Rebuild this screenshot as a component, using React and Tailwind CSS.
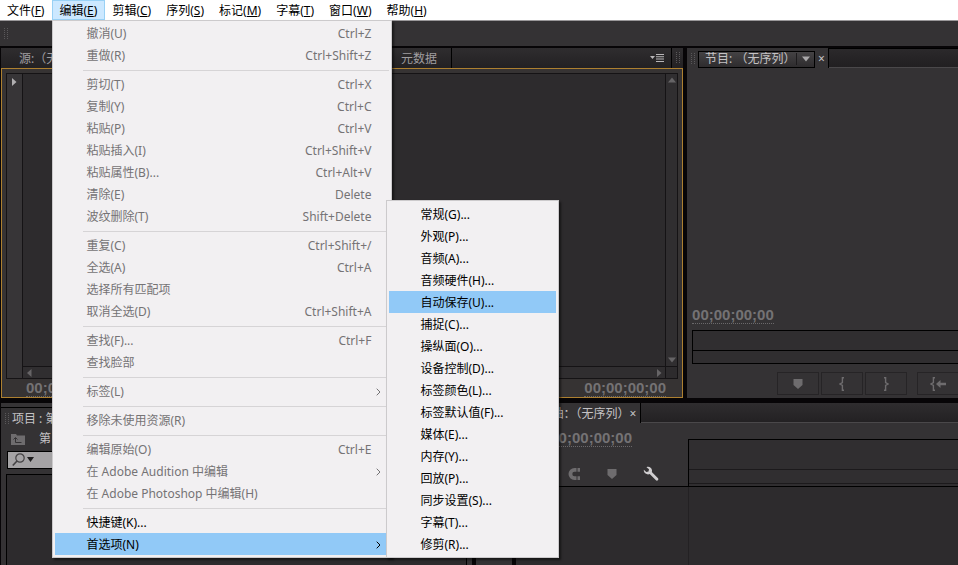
import React, { useState } from 'react';

const MENUS = [
  ['文件', 'F'],
  ['编辑', 'E'],
  ['剪辑', 'C'],
  ['序列', 'S'],
  ['标记', 'M'],
  ['字幕', 'T'],
  ['窗口', 'W'],
  ['帮助', 'H']
];

// null is a separator line
const EDIT_ITEMS = [
  { label: '撤消(U)', keys: 'Ctrl+Z' },
  { label: '重做(R)', keys: 'Ctrl+Shift+Z' },
  null,
  { label: '剪切(T)', keys: 'Ctrl+X' },
  { label: '复制(Y)', keys: 'Ctrl+C' },
  { label: '粘贴(P)', keys: 'Ctrl+V' },
  { label: '粘贴插入(I)', keys: 'Ctrl+Shift+V' },
  { label: '粘贴属性(B)...', keys: 'Ctrl+Alt+V' },
  { label: '清除(E)', keys: 'Delete' },
  { label: '波纹删除(T)', keys: 'Shift+Delete' },
  null,
  { label: '重复(C)', keys: 'Ctrl+Shift+/' },
  { label: '全选(A)', keys: 'Ctrl+A' },
  { label: '选择所有匹配项' },
  { label: '取消全选(D)', keys: 'Ctrl+Shift+A' },
  null,
  { label: '查找(F)...', keys: 'Ctrl+F' },
  { label: '查找脸部' },
  null,
  { label: '标签(L)', arrow: true },
  null,
  { label: '移除未使用资源(R)' },
  null,
  { label: '编辑原始(O)', keys: 'Ctrl+E' },
  { label: '在 Adobe Audition 中编辑', arrow: true },
  { label: '在 Adobe Photoshop 中编辑(H)' },
  null,
  { label: '快捷键(K)...', enabled: true }
];

const PREFERENCES = [
  '常规(G)...',
  '外观(P)...',
  '音频(A)...',
  '音频硬件(H)...',
  '自动保存(U)...',
  '捕捉(C)...',
  '操纵面(O)...',
  '设备控制(D)...',
  '标签颜色(L)...',
  '标签默认值(F)...',
  '媒体(E)...',
  '内存(Y)...',
  '回放(P)...',
  '同步设置(S)...',
  '字幕(T)...',
  '修剪(R)...'
];

const Chevron = () => (
  <svg viewBox="0 0 5 8" className="w-[5px] h-2" fill="none" stroke="currentColor">
    <path d="M.7.7L4 4 .7 7.300" />
  </svg>
);

const Triangle = ({ className = '', d }) => (
  <svg viewBox="0 0 8 8" className={`w-2 h-2 ${className}`} fill="currentColor">
    <path d={d} />
  </svg>
);

const UP = 'M4 1.5L8 6.5H0z';
const DOWN = 'M0 1.5h8L4 6.5z';
const LEFT = 'M6.5 0v8L2 4z';
const RIGHT = 'M2 0v8l4.5-4z';

const Marker = () => (
  <svg viewBox="0 0 10 10" className="w-[10px] h-[10px]" fill="currentColor">
    <path d="M.5 0h9v6L5 10 .5 6z" />
  </svg>
);

const Brace = ({ flip }) => (
  <svg viewBox="0 0 6 14" className={flip ? 'w-[6px] h-[14px] -scale-x-100' : 'w-[6px] h-[14px]'} fill="none" stroke="currentColor" strokeWidth="1.4">
    <path d="M5 .7H3.4v5L1 7l2.4 1.3v5H5" />
  </svg>
);

const Grip = () => (
  <svg viewBox="0 0 4 12" className="w-1 h-3 shrink-0" stroke="#5a585a" strokeDasharray="1 1">
    <path d="M.5 0v12M3.5 0v12" />
  </svg>
);

const Timecode = ({ value = '00;00;00;00' }) => (
  <span className="font-['Liberation_Sans'] font-bold text-[15px] leading-4 text-[#747274] border-b border-dotted border-[#6a686a]">
    {value}
  </span>
);

const MenuItem = ({ item }) => (
  <button
    type="button"
    role="menuitem"
    disabled={!item.enabled}
    className={`flex w-full h-[22px] items-center pt-[2px] pl-[31px] pr-2 ${item.enabled ? 'text-black' : 'text-[#757375]'}`}
  >
    <span className="flex-1 text-left">{item.label}</span>
    {item.keys && <span className="pr-[10px]">{item.keys}</span>}
    {item.arrow && <Chevron />}
  </button>
);

const EditMenu = () => {
  const [hovered, setHovered] = useState(4);

  return (
    <div role="menu" className="absolute z-10 left-0 top-full w-[340px] bg-[#f2f0f2] border border-[#cccacc] px-[2px] pt-px pb-[2px] shadow-[2px_2px_2px_rgba(0,0,0,0.5)]">
      {EDIT_ITEMS.map((item, i) =>
        item ? (
          <MenuItem key={i} item={item} />
        ) : (
          <div key={i} className="h-[7px] pl-7 pt-px flex items-center">
            <div className="h-px flex-1 bg-[#d6d4d6]" />
          </div>
        )
      )}
      <div className="relative">
        <button type="button" role="menuitem" className="flex w-full h-[22px] items-center pt-[2px] pl-[31px] pr-2 bg-[#91c9f7]">
          <span className="flex-1 text-left">首选项(N)</span>
          <Chevron />
        </button>
        <div role="menu" className="absolute left-full -ml-[3px] -bottom-[3px] w-[173px] bg-[#f2f0f2] border border-[#cccacc] p-[2px] shadow-[2px_2px_2px_rgba(0,0,0,0.5)]">
          {PREFERENCES.map((label, i) => (
            <button
              key={label}
              type="button"
              role="menuitem"
              onMouseEnter={() => setHovered(i)}
              className={`flex items-center w-full h-[22px] pt-[2px] pl-[31px] ${i === hovered ? 'bg-[#91c9f7]' : ''}`}
            >
              {label}
            </button>
          ))}
        </div>
      </div>
    </div>
  );
};

const MenuBar = () => (
  <nav className="flex h-5 shrink-0 bg-white text-black">
    {MENUS.map(([name, key]) => (
      <div key={key} className="relative">
        <button
          type="button"
          className={`h-5 pt-px pl-[6px] pr-[7px] border leading-4 ${key === 'E' ? 'bg-[#cce8ff] border-[#99d1f5]' : 'border-transparent'}`}
        >
          {name}(<u>{key}</u>)
        </button>
        {key === 'E' && <EditMenu />}
      </div>
    ))}
  </nav>
);

const SourceMonitor = () => (
  <section className="w-[71.3%] shrink-0 flex flex-col pl-px">
    <div className="h-5 flex items-stretch bg-linear-to-b from-[#2f2d2f] to-[#232123] text-[#a09ea0]">
      <button type="button" className="w-[386px] pt-[2px] pl-[18px] text-left">源:（无</button>
      <button type="button" className="w-[65px] pt-[2px] border-x border-black text-left pl-[13px]">元数据</button>
      <div className="flex-1" />
      <button type="button" aria-label="面板菜单" className="px-[7px] text-[#b8b6b8]">
        <svg viewBox="0 0 14 8" className="w-[14px] h-2" fill="currentColor">
          <path d="M0 2h5L2.500 5zM6 0h8v1H6zM6 2.300h8v1H6zM6 4.600h8v1H6zM6 7h8v1H6z" />
        </svg>
      </button>
      <div className="w-3 border-l border-black flex items-center justify-center"><Grip /></div>
    </div>
    <div className="flex-1 flex flex-col border border-[#ad8030] bg-[#363333] pt-1 px-1">
      <div className="flex-1 grid grid-cols-[16px_1fr_12px] grid-rows-[1fr_12px] border border-[#151315] bg-[#2d2b2d] text-[#666466]">
        <div className="row-span-2 bg-[#373537] border-r border-[#151315] pt-1 pl-[3px]">
          <Triangle d={RIGHT} className="text-[#b0aeb0]" />
        </div>
        <div />
        <div className="border-l border-[#151315] bg-[#302e30] flex flex-col justify-between items-center py-[2px]">
          <Triangle d={UP} />
          <Triangle d={DOWN} />
        </div>
        <div className="border-t border-[#151315] bg-[#302e30] flex justify-between items-center px-[2px]">
          <Triangle d={LEFT} />
          <Triangle d={RIGHT} />
        </div>
        <div className="border-t border-l border-[#151315]" />
      </div>
      <div className="h-[18px] pt-px flex justify-between pl-5 pr-3">
        <Timecode value="00;00" />
        <Timecode />
      </div>
    </div>
  </section>
);

const ControlButton = ({ label, children, className = '' }) => (
  <button
    type="button"
    aria-label={label}
    className={`w-[42px] h-[23px] shrink-0 border border-[#262426] flex items-center justify-center ${className}`}
  >
    {children}
  </button>
);

const ProgramMonitor = () => (
  <section className="flex-1 min-w-0 flex flex-col bg-[#343234]">
    <div className="h-5 shrink-0 flex">
      <div className="flex items-center pt-[2px] pl-1 gap-[3px] w-[142px] border-r border-black">
        <Grip />
        <button type="button" className="h-[17px] w-[117px] shrink-0 flex items-center pl-[6px] border border-black bg-linear-to-b from-[#444244] to-[#2e2c2e] text-[#c4c2c4] whitespace-nowrap">
          <span className="flex-1 text-left">节目: （无序列）</span>
          <span className="border-l border-[#1d1b1d] pl-[5px] pr-1"><Triangle d={DOWN} className="my-[2px] text-[#aaa8aa]" /></span>
        </button>
        <button type="button" aria-label="关闭" className="text-[#c4c2c4]">×</button>
      </div>
      <div className="flex-1 bg-linear-to-b from-[#2b292b] to-[#211f21] border-y border-b-[#4a484a] border-t-black" />
    </div>
    <div className="flex-1" />
    <div className="pl-[5px] flex"><Timecode /></div>
    <div className="ml-[5px] mt-[6px] border border-r-0 border-black bg-[#302e30]">
      <div className="h-5 border-b border-black" />
      <div className="h-3" />
    </div>
    <div className="mt-2 mb-[3px] pl-[90px] flex gap-[2px] overflow-hidden text-[#6e6c6e]">
      <ControlButton label="添加标记"><Marker /></ControlButton>
      <ControlButton label="标记入点"><Brace /></ControlButton>
      <ControlButton label="标记出点"><Brace flip /></ControlButton>
      <ControlButton label="转到入点" className="ml-2">
        <Brace />
        <svg viewBox="0 0 10 8" className="w-[10px] h-2" fill="currentColor">
          <path d="M0 4l4.500-4v2.800H10v2.400H4.500V8z" />
        </svg>
      </ControlButton>
    </div>
  </section>
);

const ProjectPanel = () => (
  <section className="w-[49.3%] shrink-0 flex flex-col pl-px">
    <div className="h-[5px] bg-[#363436] border-b border-black" />
    <div className="flex-1 flex flex-col bg-[#343234] text-[#c4c2c4]">
      <div className="h-5 pt-[2px] flex items-center gap-[3px] pl-1">
        <Grip />
        <span>项目 : 第</span>
      </div>
      <div className="h-5 pt-[2px] flex items-center gap-[14px] pl-[10px]">
        <svg viewBox="0 0 14 11" className="w-[14px] h-[11px]">
          <path d="M0 0h5l1 1.500h8V11H0z" fill="#6e6c6e" />
          <path d="M4.500 8.500h6M4.500 8.500V4M2.500 5.500l2-2 2 2" fill="none" stroke="#343234" />
        </svg>
        <span>第</span>
      </div>
      <label className="mx-[6px] mt-[3px] h-[18px] flex items-center bg-[#a5a3a5] border border-black text-[#201e20]">
        <svg viewBox="0 0 24 14" className="w-6 h-[14px] ml-1 shrink-0">
          <circle cx="8" cy="5" r="4.200" fill="none" stroke="#454345" strokeWidth="1.200" />
          <path d="M5 8L.8 12.500" stroke="#454345" strokeWidth="1.600" />
          <path d="M15 4h7l-3.500 5z" fill="currentColor" />
        </svg>
        <input type="text" aria-label="搜索" className="flex-1 min-w-0 outline-none" />
      </label>
      <div className="mt-[5px] mx-[5px] flex-1 border border-b-0 border-black bg-[#2d2b2d]" />
    </div>
  </section>
);

const Timeline = () => (
  <section className="flex-1 min-w-0 flex flex-col bg-[#343234]">
    <div className="h-5 flex text-[#c4c2c4] shrink-0">
      <div className="w-[125px] pt-px flex items-center justify-end pr-1 whitespace-nowrap border-r border-black">
        <span>时间轴：（无序列）</span>
        <button type="button" aria-label="关闭">×</button>
      </div>
      <div className="flex-1 bg-linear-to-b from-[#2f2d2f] to-[#232123] border-b border-[#4a484a]" />
    </div>
    <div className="h-16 flex border-b border-black shrink-0">
      <div className="w-[172px] flex flex-col justify-between pt-[7px] pb-1 pl-[34px]">
        <div className="flex"><Timecode /></div>
        <div className="flex items-center gap-[26px] pl-[17px] text-[#6e6c6e]">
          <svg viewBox="0 0 14 14" className="w-[14px] h-[14px] shrink-0" fill="none" stroke="currentColor" strokeWidth="3.800">
            <path d="M13 2.900H7.500a4.100 4.100 0 0 0 0 8.200H13" />
            <path d="M10 .5v4.800M10 8.700v4.800" stroke="#343234" strokeWidth="1" />
          </svg>
          <Marker />
          <svg viewBox="0 0 16 16" className="w-4 h-4 shrink-0 text-[#d0ced0]" fill="currentColor">
            <path d="M3.500 1.200C5.800.2 8.600 1.500 9 4.200c.1.600 0 1.200-.2 1.800l6 6c.7.700.7 1.600.1 2.200s-1.500.6-2.200-.1l-6-6C4.400 8.900 1.800 8 1 5.600c-.2-.6-.3-1.200-.1-1.900l2.400 2.200 2.200-.5.500-2.100z" />
          </svg>
        </div>
      </div>
      <div className="flex-1 mt-4 border-l border-t border-black bg-[#302e30]">
        <div className="h-[30px] border-b border-[#1c1a1c]" />
        <div className="h-[14px] border-b border-[#1c1a1c]" />
      </div>
    </div>
    <div className="flex-1 flex bg-[#2d2b2d]">
      <div className="w-[172px]" />
      <div className="flex-1 border-l border-[#232123]" />
    </div>
  </section>
);

const App = () => {
  return (
    <div className="h-screen flex flex-col overflow-hidden bg-[#070507] text-[12px] font-['Noto_Sans','Noto_Sans_CJK_SC',sans-serif]">
      <MenuBar />
      <div className="h-[26px] shrink-0 bg-[#343234] border-t border-[#9a989a] flex items-center pl-1"><Grip /></div>
      <main className="flex-1 min-h-0 flex flex-col pt-[2px] gap-[5px]">
        <div className="flex-1 flex gap-1">
          <SourceMonitor />
          <ProgramMonitor />
        </div>
        <div className="h-[162px] shrink-0 flex gap-1">
          <ProjectPanel />
          <div className="w-9 shrink-0 bg-[#343234]" />
          <Timeline />
        </div>
      </main>
    </div>
  );
};

export default App;
